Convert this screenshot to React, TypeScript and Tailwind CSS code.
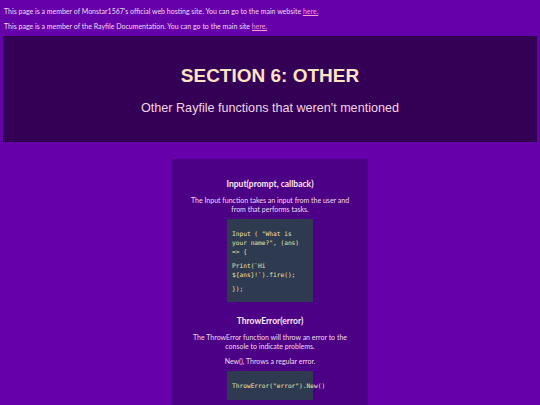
export default function App() {
  const body = { fontFamily: "Lato, 'DejaVu Sans', sans-serif" };
  const mono = { fontFamily: "'DejaVu Sans Mono', monospace" };
  return (
    <div className="min-h-[405px] bg-[#6600aa] text-[#f3dcf0] pt-[7px]" style={body}>
      <p className="text-[7px] leading-[8px] px-[4px]">
        This page is a member of Monstar1567's official web hosting site. You can go to the main website{" "}
        <a className="underline text-[#ff99cc]">here.</a>
      </p>
      <p className="text-[7px] leading-[8px] px-[4px] mt-[7px]">
        This page is a member of the Rayfile Documentation. You can go to the main site{" "}
        <a className="underline text-[#ff99cc]">here.</a>
      </p>

      <div
        className="mx-[3px] mt-[6px] h-[106px] bg-[#330055] border border-[#2a0045] flex flex-col items-center pt-[29px]"
        style={{ fontFamily: "'Liberation Sans', Arial, sans-serif" }}
      >
        <h1 className="text-[19px] font-bold text-[#ffe4c4] leading-none">SECTION 6: OTHER</h1>
        <p className="text-[12.6px] text-[#f5d5e5] mt-[17px] leading-none">Other Rayfile functions that weren't mentioned</p>
      </div>

      <div className="w-[196px] mx-auto mt-[17px] bg-[#4b0085] pt-[20px] pb-[10px] text-center">
        <h2 className="text-[8.5px] font-bold text-[#fde8f5] leading-[10px]">Input(prompt, callback)</h2>
        <p className="text-[7px] leading-[9px] mt-[7px] px-[18px]">
          The Input function takes an input from the user and from that performs tasks.
        </p>
        <div className="w-[86px] mx-auto mt-[5px] bg-[#2e3a50] text-left text-[6.2px] leading-[9px] text-[#f0e2a8] px-[5px] pt-[10px] pb-[9px]" style={mono}>
          <p>Input ( "What is your name?", (ans) =&gt; {"{"}</p>
          <p className="mt-[5px]">Print(`Hi {"${ans}"}!`).fire();</p>
          <p className="mt-[5px]">{"});"}</p>
        </div>

        <h2 className="text-[8.5px] font-bold text-[#fde8f5] leading-[10px] mt-[14px]">ThrowError(error)</h2>
        <p className="text-[7px] leading-[9px] mt-[7px] px-[18px]">
          The ThrowError function will throw an error to the console to indicate problems.
        </p>
        <p className="text-[7px] leading-[9px] mt-[6px]">New(), Throws a regular error.</p>
        <div className="w-[86px] mx-auto mt-[5px] bg-[#2e3a50] text-left text-[6.2px] leading-[9px] text-[#f0e2a8] px-[5px] py-[10px] whitespace-nowrap" style={mono}>
          <p>ThrowError("error").New()</p>
        </div>
      </div>
    </div>
  );
}
